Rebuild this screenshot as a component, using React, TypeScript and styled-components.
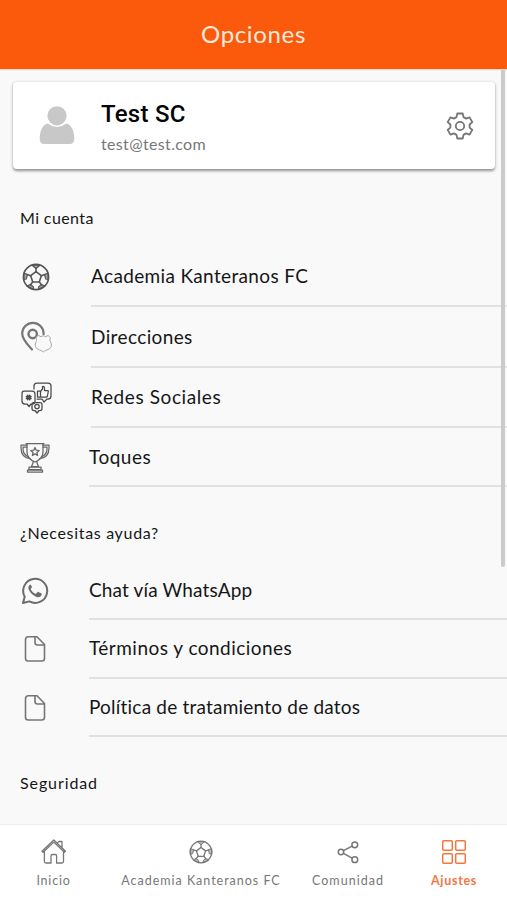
import React from "react";
import styled, { createGlobalStyle } from "styled-components";

const GlobalStyle = createGlobalStyle`
  * { box-sizing: border-box; }
  body { margin: 0; background: #f9f9f9; font-family: Lato, "Open Sans", sans-serif; }
`;

const Screen = styled.div`
  position: relative;
  display: flex;
  flex-direction: column;
  width: 507px;
  height: 900px;
  overflow: hidden;
  background: #f9f9f9;
  color: #161616;
`;

const Header = styled.header`
  flex: none;
  height: 69px;
  display: flex;
  align-items: center;
  justify-content: center;
  padding-bottom: 2px;
  background: #fb590c;
  color: #ffeadb;
  font-size: 24px;
  letter-spacing: 0.65px;
  box-shadow: 0 1px 1px #ffd9c6;
`;

const Content = styled.main`
  flex: 1;
  min-height: 0;
  overflow: hidden;
`;

const ProfileCard = styled.section`
  display: flex;
  align-items: center;
  height: 87px;
  margin: 13px 12px 0 13px;
  padding: 0 21px 0 26px;
  background: #fff;
  border-radius: 4px;
  box-shadow: 0 1.5px 3px rgba(0, 0, 0, 0.42);
`;

const Identity = styled.div`
  flex: 1;
  padding: 3px 0 0 26px;
`;

const UserName = styled.div`
  font-family: Roboto, sans-serif;
  font-weight: 500;
  font-size: 24px;
  line-height: 30px;
  letter-spacing: 0.25px;
  color: #050505;
`;

const Email = styled.div`
  margin-top: 4px;
  font-size: 16px;
  line-height: 22px;
  letter-spacing: 0.35px;
  color: #777;
`;

const SectionTitle = styled.h2<{ $height: number; $top: number; $spacing: number }>`
  margin: 0;
  height: ${(p) => p.$height}px;
  padding: ${(p) => p.$top}px 0 0 20px;
  font-weight: 400;
  font-size: 16px;
  line-height: 20px;
  letter-spacing: ${(p) => p.$spacing}px;
`;

const Row = styled.div<{ $height: number; $indent: number }>`
  display: grid;
  grid-template-columns: ${(p) => p.$indent}px 1fr;
  height: ${(p) => p.$height}px;
`;

const RowIcon = styled.div<{ $narrow: boolean }>`
  display: flex;
  align-items: center;
  justify-content: center;
  width: ${(p) => (p.$narrow ? 30 : 32)}px;
  margin-left: 20px;
  color: #555;
`;

const RowLabel = styled.div<{ $spacing: number }>`
  display: flex;
  align-items: center;
  padding-bottom: 1px;
  border-bottom: 2px solid #e1e1e1;
  font-size: 19px;
  letter-spacing: ${(p) => p.$spacing}px;
  white-space: nowrap;
`;

const ScrollThumb = styled.div`
  position: absolute;
  top: 70px;
  right: 2px;
  width: 4px;
  height: 497px;
  background: #cbcbcb;
  border-radius: 0 0 2px 2px;
`;

const TabBar = styled.nav`
  flex: none;
  display: grid;
  grid-template-columns: 107px 188px 106px 106px;
  height: 76px;
  background: #fff;
  border-top: 1px solid #eee;
`;

const Tab = styled.div<{ $active?: boolean }>`
  display: flex;
  flex-direction: column;
  align-items: center;
  padding-top: 13px;
  color: ${(p) => (p.$active ? "#f4763f" : "#777")};
`;

const TabIcon = styled.div`
  display: flex;
  align-items: center;
  justify-content: center;
  height: 28px;
`;

const TabLabel = styled.span<{ $spacing: number; $strong?: boolean }>`
  margin-top: 7px;
  font-size: 12.5px;
  font-weight: ${(p) => (p.$strong ? 700 : 400)};
  line-height: 16px;
  letter-spacing: ${(p) => p.$spacing}px;
  white-space: nowrap;
`;

const Svg = styled.svg<{ $tone?: string }>`
  display: block;
  flex: none;
  fill: none;
  stroke: ${(p) => p.$tone ?? "currentColor"};
  stroke-linecap: round;
  stroke-linejoin: round;
`;

const Person = () => (
  <Svg width="36" height="40" viewBox="0 0 36 40">
    <g fill="#c8c8c8" stroke="none">
      <circle cx="18" cy="9.800" r="9.600" />
      <path d="M8.500 17.500Q18 24.500 27.500 17.500C33 19 35.300 26 35.300 32.500Q35.300 38 30.500 38H5.500Q.7 38 .7 32.500C.7 26 3 19 8.500 17.500Z" />
    </g>
  </Svg>
);

const Gear = () => (
  <Svg width="28" height="28" viewBox="0 0 28 28" $tone="#757575" strokeWidth="1.8">
    <path d="M11.300 1.500h5.400l.8 3.600 2.600 1.500 3.500-1.200 2.700 4.700-2.700 2.400v3l2.700 2.400-2.700 4.700-3.500-1.200-2.600 1.500-.8 3.600h-5.400l-.8-3.600-2.600-1.500-3.500 1.200-2.700-4.700 2.700-2.400v-3L1.700 10.100l2.700-4.700 3.500 1.200 2.600-1.500Z" />
    <circle cx="14" cy="14" r="4.200" />
  </Svg>
);

const Ball = ({ size, weight }: { size: number; weight: number }) => (
  <Svg width={size} height={size} viewBox="0 0 28 28" strokeWidth={weight}>
    <circle cx="14" cy="14" r="12.600" />
    <path d="m14 8.700 5.300 4-2 6.300h-6.600l-2-6.300Z" />
    <path d="M14 8.700V5M19.300 12.700l3.700-1.200M17.300 19l2.500 3M10.700 19l-2.500 3M8.700 12.700 5 11.500" />
    <path
      d="M10 2.200 14 5.500l4-3.300ZM26 10l-3.500 1.500 1.200 4.500 2.500.5ZM23 23l-3.500-1.500-3 2.500.4 2.200ZM11.100 26.200l.4-2.200-3-2.500L5 23ZM1.800 16.500l2.500-.5 1.200-4.500L2 10Z"
      fill="currentColor"
      fillOpacity="0.5"
      strokeWidth={weight * 0.7}
    />
  </Svg>
);

const Place = () => (
  <Svg width="32" height="34" viewBox="0 0 32 34">
    <path d="M12 28.500C7.500 23.500 2.200 18.500 2.200 12.500a10.700 10.700 0 0 1 21.400 0v.8" stroke="#777" strokeWidth="2.200" />
    <circle cx="12.700" cy="13" r="4.200" stroke="#777" strokeWidth="2.400" />
    <path d="m18.500 14.500 2.500 1.200 2.300-1 2.300 1 2.500-1.200 2.400 2.300c-1.700 3 .9 4.300.9 7.200 0 4.800-5.600 4.500-8.100 7-2.500-2.500-8.100-2.200-8.100-7 0-2.900 2.600-4.200.9-7.200Z" stroke="#a5a5a5" fill="#f9f9f9" />
  </Svg>
);

const Social = () => (
  <Svg width="31" height="32" viewBox="0 0 31 32" $tone="#484848" strokeWidth="1.25">
    <path d="M13 7V4q0-3 3-3h11q3 0 3 3v10q0 3-3 3h-1l-3 3-2-3h-5" />
    <path d="M16.500 9h3v6h-3zM19.500 9.500l2-2.500V4.500q2-.5 2 2V8.500h3q1 0 .8 1l-1 5q-.2.700-1 .7h-5.800" />
    <path d="M3 9h8q3 0 3 3v7.500q0 2.500-3 2.500h-1l-2 2.500L6 22H4q-3 0-3-3v-7.500Q1 9 3 9Z" />
    <path d="M6.700 13.200v4.600M8.700 13.200v4.600M5.400 14.600h4.600M5.400 16.500h4.600" strokeWidth="1.600" />
    <path d="M12 20.500h7q2 0 2 2v4q0 2-2 2h-1L16 31l-2-2.500h-1q-2 0-2-2v-4q0-2 1-2Z" />
    <circle cx="16" cy="24.500" r="2.200" />
  </Svg>
);

const Trophy = () => (
  <Svg width="30" height="31" viewBox="0 0 30 31" $tone="#666" strokeWidth="1.250">
    <path d="M6 1.500h18M7 2v8c0 5.500 3.300 8 8 10 4.700-2 8-4.500 8-10V2M13 19v2l-1.500 3.500h7L17 21v-2M9 25h12v2.500H9zM7.500 28h15v2h-15z" />
    <path d="M7 3H1v3c0 5.500 3 10 9.500 11M7 5H3v2c0 3.500 1.700 6.300 5.500 8M23 3h6v3c0 5.500-3 10-9.500 11M23 5h4v2c0 3.500-1.700 6.300-5.500 8" />
    <path d="m15 5.500 1.200 2.700 3 .3-2.300 2 .7 3-2.600-1.600-2.600 1.600.7-3-2.300-2 3-.3Z" />
  </Svg>
);

const WhatsApp = () => (
  <Svg width="28" height="28" viewBox="0 0 28 28" $tone="#6c6c6c">
    <path d="M2 26l1.700-6.300A12 12 0 1 1 8.400 24.400Z" strokeWidth="2" />
    <path d="M9.700 7.500c-.5 0-1 .3-1.400.8-1.500 1.700-1 4 .2 5.800 1.800 2.800 4 4.800 7 5.800 2.200.7 4.300 0 5-1.700.3-.8.300-1.500.1-1.700l-3.200-1.600c-.6-.2-.8 0-1.100.4l-1 1.300c-.3.300-.6.300-1 .1-2-.9-3.500-2.300-4.500-4.200-.2-.4-.1-.6.200-.9l.8-1c.2-.4.200-.6 0-1L9.700 7.700Z" fill="#6c6c6c" stroke="none" />
  </Svg>
);

const Document = () => (
  <Svg width="30" height="28" viewBox="0 0 30 28" $tone="#757575" strokeWidth="1.600">
    <path d="M8.500 1.700H17l7.500 7.800v13.800q0 2.700-2.700 2.700H8.200q-2.700 0-2.700-2.700V4.700q0-3 3-3ZM15 1.700V7.500q0 2.500 2.500 2.500h7" />
  </Svg>
);

const House = () => (
  <Svg width="28" height="28" viewBox="0 0 28 28" strokeWidth="1.300">
    <path d="M2 13.200 13.800 2l11.700 11.200-1.100 1L13.800 4.100 3.100 14.300ZM4.400 13v10.500q0 1.500 1.500 1.500H11v-7q0-1.500 1.500-1.500h2.600q1.500 0 1.500 1.500v7H22q1.500 0 1.500-1.500V13M17.200 5l1.800-1.500h3V9.500" />
  </Svg>
);

const Share = () => (
  <Svg width="28" height="28" viewBox="0 0 28 28" strokeWidth="1.500">
    <circle cx="7" cy="14" r="2.700" />
    <circle cx="20.800" cy="6.800" r="2.900" />
    <circle cx="20.800" cy="21.700" r="2.900" />
    <path d="m9.500 12.600 8.600-4.500M9.500 15.400l8.600 4.700" />
  </Svg>
);

const Squares = () => (
  <Svg width="28" height="28" viewBox="0 0 28 28" strokeWidth="1.500">
    <rect x="2.700" y="2.700" width="9.600" height="9.600" rx="1" />
    <rect x="15.700" y="2.700" width="9.600" height="9.600" rx="1" />
    <rect x="2.700" y="15.700" width="9.600" height="9.600" rx="1" />
    <rect x="15.700" y="15.700" width="9.600" height="9.600" rx="1" />
  </Svg>
);

interface Option {
  label: string;
  icon: React.ReactNode;
  height: number;
  indent: number;
  spacing: number;
}

const account: Option[] = [
  { label: "Academia Kanteranos FC", icon: <Ball size={28} weight={1.6} />, height: 61, indent: 91, spacing: 0.35 },
  { label: "Direcciones", icon: <Place />, height: 61, indent: 91, spacing: 0.38 },
  { label: "Redes Sociales", icon: <Social />, height: 60, indent: 91, spacing: 0.6 },
  { label: "Toques", icon: <Trophy />, height: 59, indent: 89, spacing: 0.5 },
];

const help: Option[] = [
  { label: "Chat vía WhatsApp", icon: <WhatsApp />, height: 59, indent: 89, spacing: 0.15 },
  { label: "Términos y condiciones", icon: <Document />, height: 58.5, indent: 89, spacing: 0.47 },
  { label: "Política de tratamiento de datos", icon: <Document />, height: 58.5, indent: 89, spacing: 0.21 },
];

const OptionList = ({ options }: { options: Option[] }) => (
  <>
    {options.map((o) => (
      <Row key={o.label} $height={o.height} $indent={o.indent}>
        <RowIcon $narrow={o.indent < 90}>{o.icon}</RowIcon>
        <RowLabel $spacing={o.spacing}>{o.label}</RowLabel>
      </Row>
    ))}
  </>
);

export default function App() {
  return (
    <Screen>
      <GlobalStyle />
      <Header>Opciones</Header>
      <Content>
        <ProfileCard>
          <Person />
          <Identity>
            <UserName>Test SC</UserName>
            <Email>test@test.com</Email>
          </Identity>
          <Gear />
        </ProfileCard>
        <SectionTitle $height={77} $top={39} $spacing={0.4}>Mi cuenta</SectionTitle>
        <OptionList options={account} />
        <SectionTitle $height={74} $top={36} $spacing={0.68}>¿Necesitas ayuda?</SectionTitle>
        <OptionList options={help} />
        <SectionTitle $height={74} $top={36} $spacing={0.9}>Seguridad</SectionTitle>
      </Content>
      <ScrollThumb />
      <TabBar>
        <Tab><TabIcon><House /></TabIcon><TabLabel $spacing={0.8}>Inicio</TabLabel></Tab>
        <Tab><TabIcon><Ball size={24} weight={1.5} /></TabIcon><TabLabel $spacing={0.98}>Academia Kanteranos FC</TabLabel></Tab>
        <Tab><TabIcon><Share /></TabIcon><TabLabel $spacing={1.05}>Comunidad</TabLabel></Tab>
        <Tab $active><TabIcon><Squares /></TabIcon><TabLabel $spacing={0.7} $strong>Ajustes</TabLabel></Tab>
      </TabBar>
    </Screen>
  );
}
